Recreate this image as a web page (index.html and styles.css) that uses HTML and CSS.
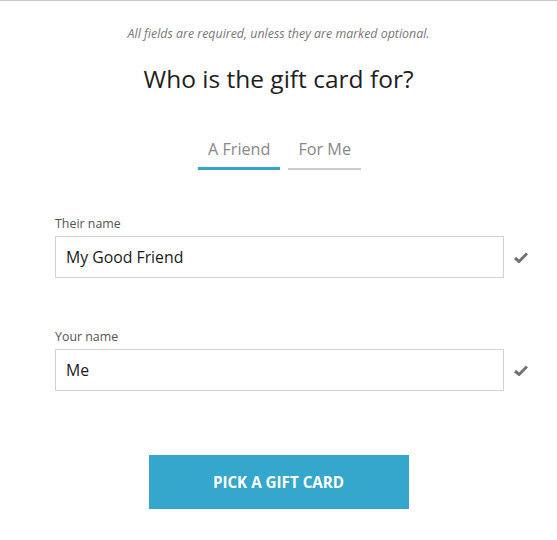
FILE: index.html
```html
<!DOCTYPE html>
<html>
<head>
<meta charset="utf-8">
<link rel="stylesheet" href="styles.css">
</head>
<body>
<div class="page">
  <p class="note">All fields are required, unless they are marked optional.</p>
  <h1 class="title">Who is the gift card for?</h1>
  <div class="tabs">
    <div class="tab active">A Friend</div>
    <div class="tab">For Me</div>
  </div>
  <div class="field">
    <label class="label">Their name</label>
    <div class="row">
      <div class="input">My Good Friend</div>
      <svg class="check" width="14" height="11" viewBox="0 0 14 11"><path d="M1 6 L5 9.5 L13 1.5" fill="none" stroke="#737373" stroke-width="3" stroke-linejoin="miter"/></svg>
    </div>
  </div>
  <div class="field">
    <label class="label">Your name</label>
    <div class="row">
      <div class="input">Me</div>
      <svg class="check" width="14" height="11" viewBox="0 0 14 11"><path d="M1 6 L5 9.5 L13 1.5" fill="none" stroke="#737373" stroke-width="3" stroke-linejoin="miter"/></svg>
    </div>
  </div>
  <div class="actions">
    <button class="btn">PICK A GIFT CARD</button>
  </div>
</div>
</body>
</html>
```

FILE: styles.css
```css
html, body {
  margin: 0;
  padding: 0;
  background: #fff;
}
body {
  font-family: "Open Sans", "Noto Sans", sans-serif;
  color: #222;
  border-top: 1px solid #c8c8c8;
}
.page {
  width: 557px;
  display: flex;
  flex-direction: column;
  align-items: center;
}
.note {
  margin: 25px 0 0;
  font-size: 12.4px;
  font-style: italic;
  color: #777;
  line-height: 16px;
}
.title {
  margin: 22px 0 0;
  font-size: 24.5px;
  font-weight: 400;
  line-height: 30px;
  color: #1e1e1e;
}
.tabs {
  margin-top: 45px;
  margin-left: 2px;
  display: flex;
  gap: 8px;
}
.tab {
  font-size: 16.2px;
  color: #888;
  line-height: 20px;
  white-space: nowrap;
  padding: 0 10px 9px;
  border-bottom: 2px solid #ccc;
  text-align: center;
}
.tab.active {
  padding: 0 10px 8px;
  border-bottom: 3px solid #35a6cc;
}
.field {
  align-self: stretch;
  margin-left: 55px;
  margin-top: 46px;
  display: flex;
  flex-direction: column;
}
.field + .field {
  margin-top: 51px;
}
.label {
  font-size: 12.4px;
  color: #555;
  line-height: 16px;
  margin-bottom: 4px;
}
.row {
  display: flex;
  align-items: center;
}
.input {
  width: 437px;
  height: 40px;
  border: 1px solid #d2d2d2;
  padding-left: 10px;
  font-size: 15.8px;
  line-height: 40px;
  color: #1a1a1a;
}
.check {
  margin-left: 10px;
  margin-top: 1px;
}
.actions {
  margin-top: 64px;
}
.btn {
  width: 260px;
  height: 54px;
  border: none;
  background: #35a6cc;
  color: #fff;
  font-family: "Open Sans", "Noto Sans", sans-serif;
  font-weight: 700;
  font-size: 15.2px;
  letter-spacing: 0;
  cursor: pointer;
}
```
